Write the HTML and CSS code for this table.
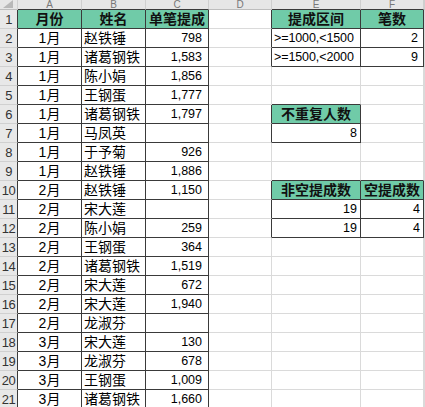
FILE: index.html
```html
<!DOCTYPE html>
<html lang="zh-CN">
<head>
<meta charset="utf-8">
<link rel="stylesheet" href="styles.css">
</head>
<body>
<div class="sheet">
  <div class="ch corner"><svg width="18" height="10" viewBox="0 0 18 10"><polygon points="13,0 13,8 3,8" fill="#b8b8b8"/></svg></div>
  <div class="ch db">A</div><div class="ch db">B</div><div class="ch db">C</div><div class="ch">D</div><div class="ch db">E</div><div class="ch db">F</div><div class="ch"></div>

  <div class="rh">1</div><div class="c t g">月份</div><div class="c t g">姓名</div><div class="c t g">单笔提成</div><div class="c dr"></div><div class="c t g">提成区间</div><div class="c t g">笔数</div><div class="c"></div>
  <div class="rh">2</div><div class="c t m">1月</div><div class="c t nm">赵铁锤</div><div class="c t n">798</div><div class="c dr"></div><div class="c t lt">&gt;=1000,&lt;1500</div><div class="c t n f">2</div><div class="c"></div>
  <div class="rh">3</div><div class="c t m">1月</div><div class="c t nm">诸葛钢铁</div><div class="c t n">1,583</div><div class="c dr"></div><div class="c t lt">&gt;=1500,&lt;2000</div><div class="c t n f">9</div><div class="c"></div>
  <div class="rh">4</div><div class="c t m">1月</div><div class="c t nm">陈小娟</div><div class="c t n">1,856</div><div class="c"></div><div class="c"></div><div class="c"></div><div class="c"></div>
  <div class="rh">5</div><div class="c t m">1月</div><div class="c t nm">王钢蛋</div><div class="c t n">1,777</div><div class="c"></div><div class="c db"></div><div class="c"></div><div class="c"></div>
  <div class="rh">6</div><div class="c t m">1月</div><div class="c t nm">诸葛钢铁</div><div class="c t n">1,797</div><div class="c dr"></div><div class="c t g">不重复人数</div><div class="c"></div><div class="c"></div>
  <div class="rh">7</div><div class="c t m">1月</div><div class="c t nm">马凤英</div><div class="c t n"></div><div class="c dr"></div><div class="c t n s">8</div><div class="c"></div><div class="c"></div>
  <div class="rh">8</div><div class="c t m">1月</div><div class="c t nm">于予菊</div><div class="c t n">926</div><div class="c"></div><div class="c"></div><div class="c"></div><div class="c"></div>
  <div class="rh">9</div><div class="c t m">1月</div><div class="c t nm">赵铁锤</div><div class="c t n">1,886</div><div class="c"></div><div class="c db"></div><div class="c db"></div><div class="c"></div>
  <div class="rh">10</div><div class="c t m">2月</div><div class="c t nm">赵铁锤</div><div class="c t n">1,150</div><div class="c dr"></div><div class="c t g">非空提成数</div><div class="c t g">空提成数</div><div class="c"></div>
  <div class="rh">11</div><div class="c t m">2月</div><div class="c t nm">宋大莲</div><div class="c t n"></div><div class="c dr"></div><div class="c t n s">19</div><div class="c t n s">4</div><div class="c"></div>
  <div class="rh">12</div><div class="c t m">2月</div><div class="c t nm">陈小娟</div><div class="c t n">259</div><div class="c dr"></div><div class="c t n s">19</div><div class="c t n s">4</div><div class="c"></div>
  <div class="rh">13</div><div class="c t m">2月</div><div class="c t nm">王钢蛋</div><div class="c t n">364</div><div class="c"></div><div class="c"></div><div class="c"></div><div class="c"></div>
  <div class="rh">14</div><div class="c t m">2月</div><div class="c t nm">诸葛钢铁</div><div class="c t n">1,519</div><div class="c"></div><div class="c"></div><div class="c"></div><div class="c"></div>
  <div class="rh">15</div><div class="c t m">2月</div><div class="c t nm">宋大莲</div><div class="c t n">672</div><div class="c"></div><div class="c"></div><div class="c"></div><div class="c"></div>
  <div class="rh">16</div><div class="c t m">2月</div><div class="c t nm">宋大莲</div><div class="c t n">1,940</div><div class="c"></div><div class="c"></div><div class="c"></div><div class="c"></div>
  <div class="rh">17</div><div class="c t m">2月</div><div class="c t nm">龙淑芬</div><div class="c t n"></div><div class="c"></div><div class="c"></div><div class="c"></div><div class="c"></div>
  <div class="rh">18</div><div class="c t m">3月</div><div class="c t nm">宋大莲</div><div class="c t n">130</div><div class="c"></div><div class="c"></div><div class="c"></div><div class="c"></div>
  <div class="rh">19</div><div class="c t m">3月</div><div class="c t nm">龙淑芬</div><div class="c t n">678</div><div class="c"></div><div class="c"></div><div class="c"></div><div class="c"></div>
  <div class="rh">20</div><div class="c t m">3月</div><div class="c t nm">王钢蛋</div><div class="c t n">1,009</div><div class="c"></div><div class="c"></div><div class="c"></div><div class="c"></div>
  <div class="rh">21</div><div class="c t m">3月</div><div class="c t nm">诸葛钢铁</div><div class="c t n">1,660</div><div class="c"></div><div class="c"></div><div class="c"></div><div class="c"></div>
</div>
</body>
</html>
```
FILE: styles.css
```css
html, body {
  margin: 0;
  padding: 0;
  background: #ffffff;
}
body {
  font-family: "Liberation Sans", "Noto Sans CJK SC", sans-serif;
  color: #000;
  overflow: hidden;
  width: 425px;
  height: 407px;
}
.sheet {
  display: grid;
  grid-template-columns: 18px 64px 64px 63px 63px 89px 63px 1fr;
  grid-template-rows: 10px;
  grid-auto-rows: 19px;
}
.sheet > div {
  box-sizing: border-box;
  overflow: hidden;
  white-space: nowrap;
}
.ch {
  background: #e6e6e6;
  color: #777;
  font-size: 10px;
  line-height: 9px;
  text-align: center;
  border-right: 1px solid #cfcfcf;
  border-bottom: 1px solid #bdbdbd;
}
.corner {
  line-height: 0;
}
.rh {
  background: #e8e8e8;
  color: #333;
  font-size: 13px;
  line-height: 18px;
  padding-top: 1px;
  text-align: center;
  letter-spacing: -0.5px;
  border-right: 1px solid #3a3a3a;
  border-bottom: 1px solid #d0d0d0;
}
.c {
  font-size: 14px;
  line-height: 17px;
  padding-top: 1px;
  border-right: 1px solid #dadada;
  border-bottom: 1px solid #dadada;
}
.t {
  border-right-color: #3a3a3a;
  border-bottom-color: #3a3a3a;
}
.dr {
  border-right-color: #3a3a3a;
}
.db {
  border-bottom-color: #3a3a3a;
}
.g {
  background: #70cba8;
  font-weight: bold;
  text-align: center;
  color: #111;
}
.m {
  text-align: center;
}
.nm {
  padding-left: 2px;
}
.n {
  font-size: 12.5px;
  text-align: right;
  padding-right: 6px;
}
.n.s {
  padding-right: 3px;
}
.n.f {
  padding-right: 5px;
}
.lt {
  font-size: 12.5px;
  padding-left: 2px;
  letter-spacing: -0.1px;
}
```
